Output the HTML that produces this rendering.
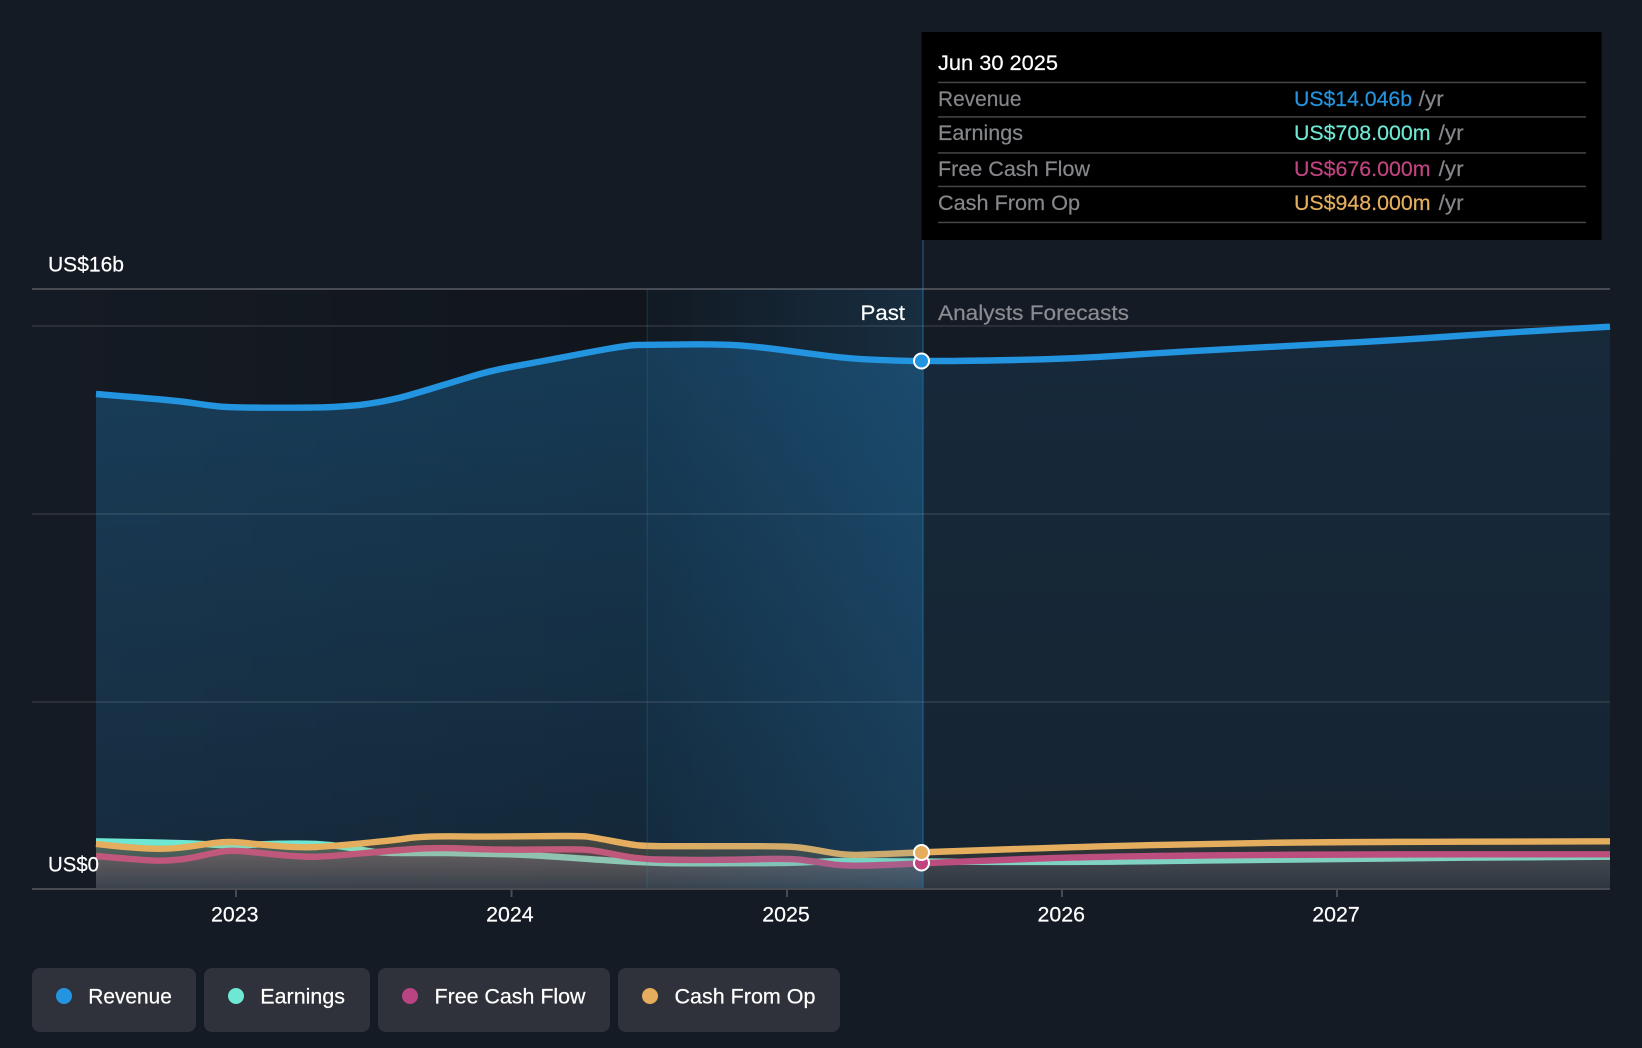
<!DOCTYPE html>
<html>
<head>
<meta charset="utf-8">
<style>
html,body{margin:0;padding:0;background:#151b24;width:1642px;height:1048px;overflow:hidden}
svg{display:block}
text{font-family:"Liberation Sans",Arial,sans-serif;font-size:21px;fill:#fff;stroke:#fff;stroke-width:.2}
.g{fill:#85878b;stroke:#85878b}
.a{fill:#8a8c91;stroke:#8a8c91}
.c1{fill:#2394df;stroke:#2394df}
.c2{fill:#6ee7d3;stroke:#6ee7d3}
.c3{fill:#c0447f;stroke:#c0447f}
.c4{fill:#e4ae5e;stroke:#e4ae5e}
</style>
</head>
<body>
<svg width="1642" height="1048" viewBox="0 0 1642 1048" xmlns="http://www.w3.org/2000/svg">
<defs>
<linearGradient id="dark" gradientUnits="userSpaceOnUse" x1="32" y1="0" x2="923" y2="0">
<stop offset="0" stop-color="#000" stop-opacity="0"/>
<stop offset="0.69" stop-color="#000" stop-opacity="0.2"/>
<stop offset="1" stop-color="#000" stop-opacity="0"/>
</linearGradient>
<linearGradient id="zone" gradientUnits="userSpaceOnUse" x1="647" y1="0" x2="923" y2="0">
<stop offset="0" stop-color="#2394df" stop-opacity="0.03"/>
<stop offset="1" stop-color="#2394df" stop-opacity="0.15"/>
</linearGradient>
<linearGradient id="revP" gradientUnits="userSpaceOnUse" x1="0" y1="340" x2="0" y2="889">
<stop offset="0" stop-color="#2394df" stop-opacity="0.29"/>
<stop offset="1" stop-color="#2394df" stop-opacity="0.13"/>
</linearGradient>
<linearGradient id="revF" gradientUnits="userSpaceOnUse" x1="0" y1="330" x2="0" y2="889">
<stop offset="0" stop-color="#2394df" stop-opacity="0.12"/>
<stop offset="1" stop-color="#2394df" stop-opacity="0.07"/>
</linearGradient>
<linearGradient id="tP" gradientUnits="userSpaceOnUse" x1="0" y1="845" x2="0" y2="889">
<stop offset="0" stop-color="#6ee7d3" stop-opacity="0.2"/>
<stop offset="1" stop-color="#6ee7d3" stop-opacity="0.06"/>
</linearGradient>
<linearGradient id="pP" gradientUnits="userSpaceOnUse" x1="0" y1="850" x2="0" y2="889">
<stop offset="0" stop-color="#b84482" stop-opacity="0.22"/>
<stop offset="1" stop-color="#b84482" stop-opacity="0.08"/>
</linearGradient>
<linearGradient id="oP" gradientUnits="userSpaceOnUse" x1="0" y1="840" x2="0" y2="889">
<stop offset="0" stop-color="#e4ae5e" stop-opacity="0.23"/>
<stop offset="1" stop-color="#e4ae5e" stop-opacity="0.09"/>
</linearGradient>
<linearGradient id="tF" gradientUnits="userSpaceOnUse" x1="0" y1="860" x2="0" y2="889">
<stop offset="0" stop-color="#6ee7d3" stop-opacity="0.12"/>
<stop offset="1" stop-color="#6ee7d3" stop-opacity="0.05"/>
</linearGradient>
<linearGradient id="pF" gradientUnits="userSpaceOnUse" x1="0" y1="855" x2="0" y2="889">
<stop offset="0" stop-color="#b84482" stop-opacity="0.12"/>
<stop offset="1" stop-color="#b84482" stop-opacity="0.05"/>
</linearGradient>
<linearGradient id="oF" gradientUnits="userSpaceOnUse" x1="0" y1="842" x2="0" y2="889">
<stop offset="0" stop-color="#e4ae5e" stop-opacity="0.12"/>
<stop offset="1" stop-color="#e4ae5e" stop-opacity="0.05"/>
</linearGradient>
</defs>

<rect width="1642" height="1048" fill="#151b24"/>
<rect x="32" y="289" width="891" height="600" fill="url(#dark)"/>

<!-- revenue -->
<polygon fill="url(#revP)" points="96,394 180,401 205,405 230,407.7 317,407.7 350,406 370,403.7 390,400 407,396 450,383 490,370.7 540,361.7 590,352 630,345 647,344.7 723,344 763,347.3 807,353.3 850,358.7 897,360.7 922,361 922,889 96,889"/>
<polygon fill="url(#revF)" points="922,361 960,361 1069,359 1177.5,351.7 1286,346 1395,340.3 1504,332.7 1610,326.7 1610,889 922,889"/>

<!-- grid -->
<rect x="32" y="288" width="1578" height="2" fill="#484b52"/>
<rect x="32" y="325" width="1578" height="2" fill="#fff" fill-opacity="0.09"/>
<rect x="32" y="513" width="1578" height="2" fill="#fff" fill-opacity="0.09"/>
<rect x="32" y="701" width="1578" height="2" fill="#fff" fill-opacity="0.09"/>

<path fill="none" stroke="#2394df" stroke-width="6.4" d="M96,394 L138,397.5 Q180,401 192.5,403 Q205,405 217.5,406.3 Q230,407.7 273.5,407.7 Q317,407.7 333.5,406.9 Q350,406 360,404.9 Q370,403.7 380,401.9 Q390,400 398.5,398 Q407,396 428.5,389.5 Q450,383 470,376.9 Q490,370.7 515,366.2 Q540,361.7 565,356.9 Q590,352 610,348.5 Q630,345 638.5,344.9 Q647,344.7 685,344.4 Q723,344 743,345.7 Q763,347.3 785,350.3 Q807,353.3 828.5,356 Q850,358.7 873.5,359.7 Q897,360.7 909.5,360.9 Q922,361 941,361 Q960,361 1014.5,360 Q1069,359 1123,355.4 Q1177.5,351.7 1232,348.9 Q1286,346 1340,343.2 Q1395,340.3 1449.5,336.5 Q1504,332.7 1557,329.7 L1610,326.7"/>

<!-- earnings -->
<polygon fill="url(#tP)" points="96,841.3 190,843 233,846 263,844 303,843.3 330,844.7 357,849 380,853 447,853 513,854.3 547,856 613,860.7 647,862.7 680,863.3 770,863 803,862.7 837,860.7 870,861.3 922,861.5 922,889 96,889"/>
<polygon fill="url(#tF)" points="922,861.5 1082,862.3 1318,858.7 1610,856.7 1610,889 922,889"/>
<path fill="none" stroke="#6ee7d3" stroke-width="6.4" d="M96,841.3 L143,842.2 Q190,843 211.5,844.5 Q233,846 248,845 Q263,844 283,843.7 Q303,843.3 316.5,844 Q330,844.7 343.5,846.9 Q357,849 368.5,851 Q380,853 401.5,853 L447,853 Q480,853.7 496.5,854 Q513,854.3 530,855.2 Q547,856 580,858.4 Q613,860.7 630,861.7 Q647,862.7 663.5,863 Q680,863.3 708.5,863.3 Q737,863.3 753.5,863.2 Q770,863 786.5,862.9 Q803,862.7 820,861.7 Q837,860.7 853.5,861 Q870,861.3 895.5,861.4 Q921,861.5 1001.5,861.9 Q1082,862.3 1200,860.5 Q1318,858.7 1464,857.7 L1610,856.7"/>

<!-- free cash flow -->
<polygon fill="url(#pP)" points="96,856 130,859 163,861.3 190,858.3 212,853 233,850 263,853.3 303,857 330,856.3 390,850.7 437,847.3 497,850 580,849 597,850.7 637,859 680,860 737,859.7 790,858.3 813,861.3 847,866.7 922,863.3 922,889 96,889"/>
<polygon fill="url(#pF)" points="922,863.3 970,861.3 1082,856.7 1318,854.3 1610,854.3 1610,889 922,889"/>
<path fill="none" stroke="#b84482" stroke-width="6.4" d="M96,856 L113,857.5 Q130,859 146.5,860.2 Q163,861.3 176.5,859.8 Q190,858.3 201,855.7 Q212,853 222.5,851.5 Q233,850 248,851.7 Q263,853.3 283,855.2 Q303,857 316.5,856.7 Q330,856.3 360,853.5 Q390,850.7 413.5,849 Q437,847.3 467,848.7 Q497,850 538.5,849.5 Q580,849 588.5,849.9 Q597,850.7 617,854.9 Q637,859 658.5,859.5 Q680,860 708.5,859.9 Q737,859.7 763.5,859 Q790,858.3 801.5,859.8 Q813,861.3 830,864 Q847,866.7 884,865 Q921,863.3 945.5,862.3 Q970,861.3 1026,859 Q1082,856.7 1200,855.5 Q1318,854.3 1464,854.3 L1610,854.3"/>

<!-- cash from op -->
<polygon fill="url(#oP)" points="96,844 130,847.5 163,849.3 190,846.7 212,843 233,841.3 263,845 303,847.7 330,846.3 390,840.7 423,836 497,836.7 580,835.7 593,837.3 633,845 647,846 680,846.3 787,846 810,848.7 843,855 870,854.7 922,852.3 922,889 96,889"/>
<polygon fill="url(#oF)" points="922,852.3 970,850.7 1082,846.7 1213,843.7 1318,842 1610,841.3 1610,889 922,889"/>
<path fill="none" stroke="#e4ae5e" stroke-width="6.4" d="M96,844 L113,845.8 Q130,847.5 146.5,848.4 Q163,849.3 176.5,848 Q190,846.7 201,844.9 Q212,843 222.5,842.2 Q233,841.3 248,843.2 Q263,845 283,846.4 Q303,847.7 316.5,847 Q330,846.3 360,843.5 Q390,840.7 406.5,838.4 Q423,836 460,836.4 Q497,836.7 538.5,836.2 Q580,835.7 586.5,836.5 Q593,837.3 613,841.2 Q633,845 640,845.5 Q647,846 663.5,846.2 Q680,846.3 733.5,846.2 Q787,846 798.5,847.4 Q810,848.7 826.5,851.9 Q843,855 856.5,854.9 Q870,854.7 895.5,853.5 Q921,852.3 945.5,851.5 Q970,850.7 1026,848.7 Q1082,846.7 1147.5,845.2 Q1213,843.7 1265.5,842.9 Q1318,842 1464,841.7 L1610,841.3"/>

<!-- past highlight -->
<rect x="647" y="289" width="276" height="600" fill="url(#zone)"/>
<rect x="646.5" y="289" width="1.5" height="600" fill="#2394df" fill-opacity="0.16"/>
<rect x="922" y="240" width="2" height="649" fill="#2394df" fill-opacity="0.3"/>

<!-- axis -->
<rect x="32" y="888" width="1578" height="2" fill="#484b52"/>
<g fill="#484b52">
<rect x="235" y="889" width="2" height="8"/>
<rect x="510.500" y="889" width="2" height="8"/>
<rect x="786" y="889" width="2" height="8"/>
<rect x="1061" y="889" width="2" height="8"/>
<rect x="1336" y="889" width="2" height="8"/>
</g>

<!-- markers -->
<circle cx="921.500" cy="361" r="7.500" fill="#2394df" stroke="#fff" stroke-width="2"/>
<circle cx="921.500" cy="863" r="7.500" fill="#c0447f" stroke="#fff" stroke-width="2"/>
<circle cx="921.500" cy="852.500" r="7.500" fill="#e4ae5e" stroke="#fff" stroke-width="2"/>

<!-- axis text -->
<text x="48" y="271.700" textLength="76" lengthAdjust="spacingAndGlyphs">US$16b</text>
<text x="48" y="871.700" textLength="51" lengthAdjust="spacingAndGlyphs">US$0</text>
<text x="211" y="921.700" textLength="47.500" lengthAdjust="spacingAndGlyphs">2023</text>
<text x="486.200" y="921.700" textLength="47.500" lengthAdjust="spacingAndGlyphs">2024</text>
<text x="762.300" y="921.700" textLength="47.500" lengthAdjust="spacingAndGlyphs">2025</text>
<text x="1037.500" y="921.700" textLength="47.500" lengthAdjust="spacingAndGlyphs">2026</text>
<text x="1312.300" y="921.700" textLength="47.500" lengthAdjust="spacingAndGlyphs">2027</text>
<text x="860.500" y="320" textLength="44.500" lengthAdjust="spacingAndGlyphs">Past</text>
<text class="a" x="938" y="320" textLength="191" lengthAdjust="spacingAndGlyphs">Analysts Forecasts</text>

<!-- tooltip -->
<rect x="921.500" y="32" width="680" height="208" fill="#000"/>
<g fill="#464646">
<rect x="938" y="81.700" width="648" height="1.500"/>
<rect x="938" y="116.200" width="648" height="1.500"/>
<rect x="938" y="152.200" width="648" height="1.500"/>
<rect x="938" y="185.700" width="648" height="1.500"/>
<rect x="938" y="221.700" width="648" height="1.500"/>
</g>
<text x="938" y="70" textLength="120" lengthAdjust="spacingAndGlyphs">Jun 30 2025</text>
<text class="g" x="938" y="106" textLength="83.500" lengthAdjust="spacingAndGlyphs">Revenue</text>
<text class="g" x="938" y="140" textLength="85" lengthAdjust="spacingAndGlyphs">Earnings</text>
<text class="g" x="938" y="176" textLength="152" lengthAdjust="spacingAndGlyphs">Free Cash Flow</text>
<text class="g" x="938" y="210" textLength="142" lengthAdjust="spacingAndGlyphs">Cash From Op</text>
<text class="c1" x="1294" y="106" textLength="118" lengthAdjust="spacingAndGlyphs">US$14.046b</text>
<text class="g" x="1418.700" y="106" textLength="25" lengthAdjust="spacingAndGlyphs">/yr</text>
<text class="c2" x="1294" y="140" textLength="136.500" lengthAdjust="spacingAndGlyphs">US$708.000m</text>
<text class="g" x="1438.600" y="140" textLength="25" lengthAdjust="spacingAndGlyphs">/yr</text>
<text class="c3" x="1294" y="176" textLength="136.500" lengthAdjust="spacingAndGlyphs">US$676.000m</text>
<text class="g" x="1438.600" y="176" textLength="25" lengthAdjust="spacingAndGlyphs">/yr</text>
<text class="c4" x="1294" y="210" textLength="136.500" lengthAdjust="spacingAndGlyphs">US$948.000m</text>
<text class="g" x="1438.600" y="210" textLength="25" lengthAdjust="spacingAndGlyphs">/yr</text>

<!-- legend -->
<g fill="#2f323a">
<rect x="32" y="968" width="164" height="64" rx="8"/>
<rect x="204" y="968" width="166" height="64" rx="8"/>
<rect x="378" y="968" width="232" height="64" rx="8"/>
<rect x="618" y="968" width="222" height="64" rx="8"/>
</g>
<circle cx="64" cy="996" r="8" fill="#2394df"/>
<circle cx="236" cy="996" r="8" fill="#6ee7d3"/>
<circle cx="410" cy="996" r="8" fill="#b84482"/>
<circle cx="650" cy="996" r="8" fill="#e4ae5e"/>
<text x="88.300" y="1003.300" textLength="83.500" lengthAdjust="spacingAndGlyphs">Revenue</text>
<text x="260.300" y="1003.300" textLength="84.700" lengthAdjust="spacingAndGlyphs">Earnings</text>
<text x="434.500" y="1003.300" textLength="151" lengthAdjust="spacingAndGlyphs">Free Cash Flow</text>
<text x="674.500" y="1003.300" textLength="141" lengthAdjust="spacingAndGlyphs">Cash From Op</text>
</svg>
</body>
</html>
